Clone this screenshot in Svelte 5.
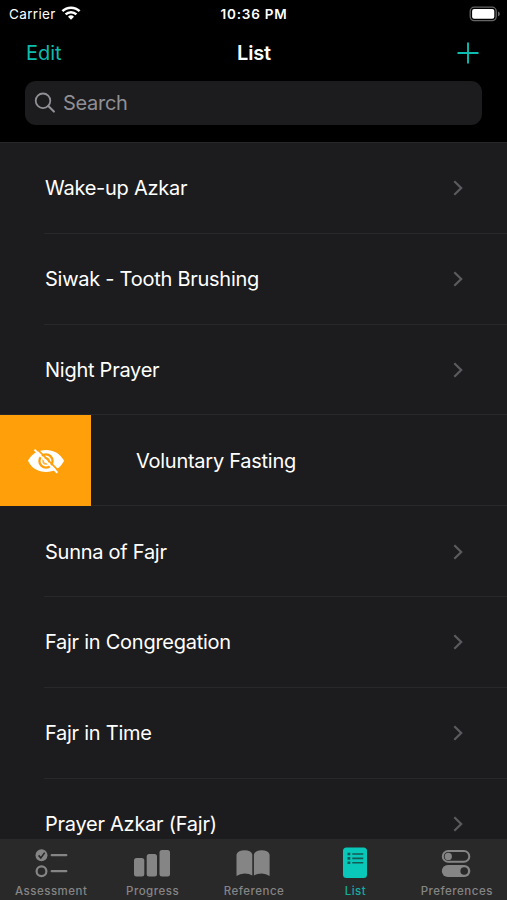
<script>
  const rows = [
    { label: 'Wake-up Azkar' },
    { label: 'Siwak - Tooth Brushing' },
    { label: 'Night Prayer' },
    { label: 'Voluntary Fasting', swiped: true },
    { label: 'Sunna of Fajr' },
    { label: 'Fajr in Congregation' },
    { label: 'Fajr in Time' },
    { label: 'Prayer Azkar (Fajr)' }
  ];
  const tabs = ['Assessment', 'Progress', 'Reference', 'List', 'Preferences'];
</script>

<div class="screen">
  <header>
    <div class="status">
      <div class="carrier">
        <span>Carrier</span>
        <svg width="20" height="16" viewBox="0 0 20 16">
          <g fill="none" stroke="#fff" stroke-width="2.5">
            <path d="M1.4 6.2a12.2 12.2 0 0 1 17.2 0" />
            <path d="M4.6 9.4a7.7 7.7 0 0 1 10.8 0" />
          </g>
          <path d="M10 14.8l-3-3a4.3 4.3 0 0 1 6 0z" fill="#fff" />
        </svg>
      </div>
      <div class="time">10:36 PM</div>
      <div class="battery">
        <svg width="32" height="16" viewBox="0 0 32 16">
          <rect x="1.2" y="1.2" width="26" height="13.4" rx="4" fill="none" stroke="#656567" stroke-width="1.3" />
          <rect x="3.1" y="3.1" width="22.2" height="9.6" rx="2" fill="#fff" />
          <path d="M29 5.5c2.4.8 2.4 4 0 4.8z" fill="#656567" />
        </svg>
      </div>
    </div>
    <div class="nav">
      <span class="edit">Edit</span>
      <span class="title">List</span>
      <svg class="add" width="22" height="22" viewBox="0 0 22 22">
        <path d="M11 .5v21M.5 11h21" stroke="#0dbcaf" stroke-width="1.9" />
      </svg>
    </div>
    <div class="search">
      <svg width="22" height="22" viewBox="0 0 22 22" fill="none" stroke="#8f8f95" stroke-width="1.8" stroke-linecap="round">
        <circle cx="9" cy="8.8" r="7.3" />
        <path d="M14.3 14.1l5.6 5.5" stroke-width="2.1" />
      </svg>
      <span>Search</span>
    </div>
  </header>

  <main>
    {#each rows as row, i}
      <div class="row" class:swiped={row.swiped} class:full={i === 2}>
        {#if row.swiped}
          <div class="hide">
            <svg width="36" height="26" viewBox="0 0 36 26">
              <path d="M.5 13.800C0 13 0 12.600.5 11.800C4 5.500 10.500 1.900 18 1.900S32 5.500 35.500 11.800c.5.800.5 1.200 0 2C32 20.500 25.500 24 18 24S4 20.500.5 13.800z" fill="#fff" />
              <circle cx="18" cy="13" r="6.600" fill="none" stroke="#ff9f0a" stroke-width="2.300" />
              <circle cx="18" cy="13" r="2.900" fill="none" stroke="#ffb23c" stroke-width="1.600" />
              <path d="M8.300.200l22.900 23.200" stroke="#ff9f0a" stroke-width="1.700" />
              <path d="M6.500 1.600l22.900 23.200" stroke="#fff" stroke-width="2" />
            </svg>
          </div>
        {/if}
        <span class="label">{row.label}</span>
        {#if !row.swiped}
          <svg class="chevron" width="10" height="16" viewBox="0 0 10 16">
            <path d="M1.300 1.300L8.200 8l-6.900 6.700" fill="none" stroke="#5b5b5f" stroke-width="2.200" />
          </svg>
        {/if}
      </div>
    {/each}
  </main>

  <nav class="tabs">
    {#each tabs as tab, i}
      <div class="tab" class:active={i === 3}>
        <svg width="36" height="34" viewBox="0 0 36 34" fill="currentColor">
          {#if i === 0}
            <circle cx="8.500" cy="9.200" r="6" />
            <path d="M5.600 9.400l2.200 2.500 3.900-5.300" fill="none" stroke="#29292a" stroke-width="1.600" />
            <circle cx="8.500" cy="25.200" r="4.900" fill="none" stroke="currentColor" stroke-width="2.200" />
            <path d="M18.700 9.200h14.600M18.700 25.200h14.600" stroke="currentColor" stroke-width="2.200" stroke-linecap="round" />
          {:else if i === 1}
            <rect y="12" width="10.300" height="18.400" rx="2.500" />
            <rect x="12.700" y="8" width="10.300" height="22.400" rx="2.500" />
            <rect x="25.500" y="4" width="10.500" height="26.400" rx="2.500" />
          {:else if i === 2}
            <path d="M1.500 8.500C2.500 5.500 5.500 4.200 9.600 4.200s6.900 1.300 7.700 4.300v20.900Q14.300 27.400 9.600 27.400T1.500 29.900z" />
            <path d="M18.900 8.500c.8-3 3.700-4.300 7.800-4.300s7 1.300 7.900 4.300v21.400Q31.200 27.400 26.700 27.400T18.900 29.400z" />
          {:else if i === 3}
            <rect x="6" y="1.500" width="24" height="30.500" rx="3.500" />
            <g stroke="#155a56" stroke-width="1.600">
              <path d="M15.300 8h11M15.300 12.400h11M15.300 16.800h11" />
              <path d="M10.500 8h2.800M10.500 12.400h2.800M10.500 16.800h2.800" stroke-width="2.600" />
            </g>
          {:else}
            <rect x="4.800" y="5.100" width="26.500" height="10.600" rx="5.300" fill="none" stroke="currentColor" stroke-width="2" />
            <circle cx="10.300" cy="10.400" r="3.600" />
            <rect x="3.800" y="19" width="28.500" height="12" rx="6" />
            <circle cx="26.200" cy="25" r="3.800" fill="#29292a" />
          {/if}
        </svg>
        <span>{tab}</span>
      </div>
    {/each}
  </nav>
</div>

<style>
  :global(body) { background: #000; }
  .screen {
    width: 507px; height: 900px; overflow: hidden;
    display: flex; flex-direction: column;
    background: #1c1c1e; color: #fff;
    font-family: Inter, "Liberation Sans", sans-serif;
    white-space: nowrap;
  }
  header { flex: 0 0 142px; background: #000; }
  .status {
    height: 28px; display: grid; grid-template-columns: 1fr auto 1fr; align-items: center;
    font-size: 13.500px; line-height: 28px;
  }
  .carrier { display: flex; align-items: center; gap: 6px; padding-left: 9px; letter-spacing: .35px; }
  .carrier svg { margin-top: -3px; margin-left: -1px; }
  .time { font-weight: 600; letter-spacing: .8px; padding-left: 1px; }
  .battery { display: flex; justify-content: flex-end; padding-right: 6px; margin-top: -1px; }
  .nav {
    height: 49px; padding: 0 28px 0 26px;
    display: grid; grid-template-columns: 1fr auto 1fr; align-items: center;
    font-size: 20px; line-height: 50px;
  }
  .edit { color: #0dbcaf; }
  .title { font-weight: 600; letter-spacing: -.15px; padding-left: 3px; }
  .add { justify-self: end; }
  .search {
    height: 44px; margin: 3.500px 25px 0; padding-left: 9px; box-sizing: border-box;
    border-radius: 11px; background: #1c1c1e; color: #8f8f95;
    display: flex; align-items: center; gap: 7px; font-size: 20px; letter-spacing: -.3px;
  }
  main { flex: 0 0 697px; overflow: hidden; }
  .row {
    height: 90.800px; box-sizing: border-box; display: flex; align-items: center;
    justify-content: space-between; padding: 0 44px 0 45px;
    background: linear-gradient(#28282a, #28282a) 44px 100% / 100% 1px no-repeat;
    font-size: 20px; letter-spacing: -.26px;
  }
  .row:first-child { height: 91.800px; border-top: 1px solid #28282a; }
  .row.full { background-position: 0 100%; }
  .row.swiped { padding-left: 0; justify-content: flex-start; background-position: 91px 100%; }
  .hide {
    width: 91px; height: 100%; margin-right: 45px; background: #ff9f0a;
    display: flex; align-items: center; justify-content: center;
  }
  .tabs {
    flex: 0 0 61px; display: grid; grid-template-columns: repeat(5, 1fr);
    background: #29292a; padding-top: 7px; box-sizing: border-box;
  }
  .tab {
    display: flex; flex-direction: column; align-items: center;
    color: #858585; font-size: 11.500px; font-weight: 500; line-height: 14px; gap: 4px;
    letter-spacing: .5px;
  }
  .tab span { padding-left: 1px; }
  .active { color: #09c8b9; }
  .active span { color: #12ada1; }
</style>
